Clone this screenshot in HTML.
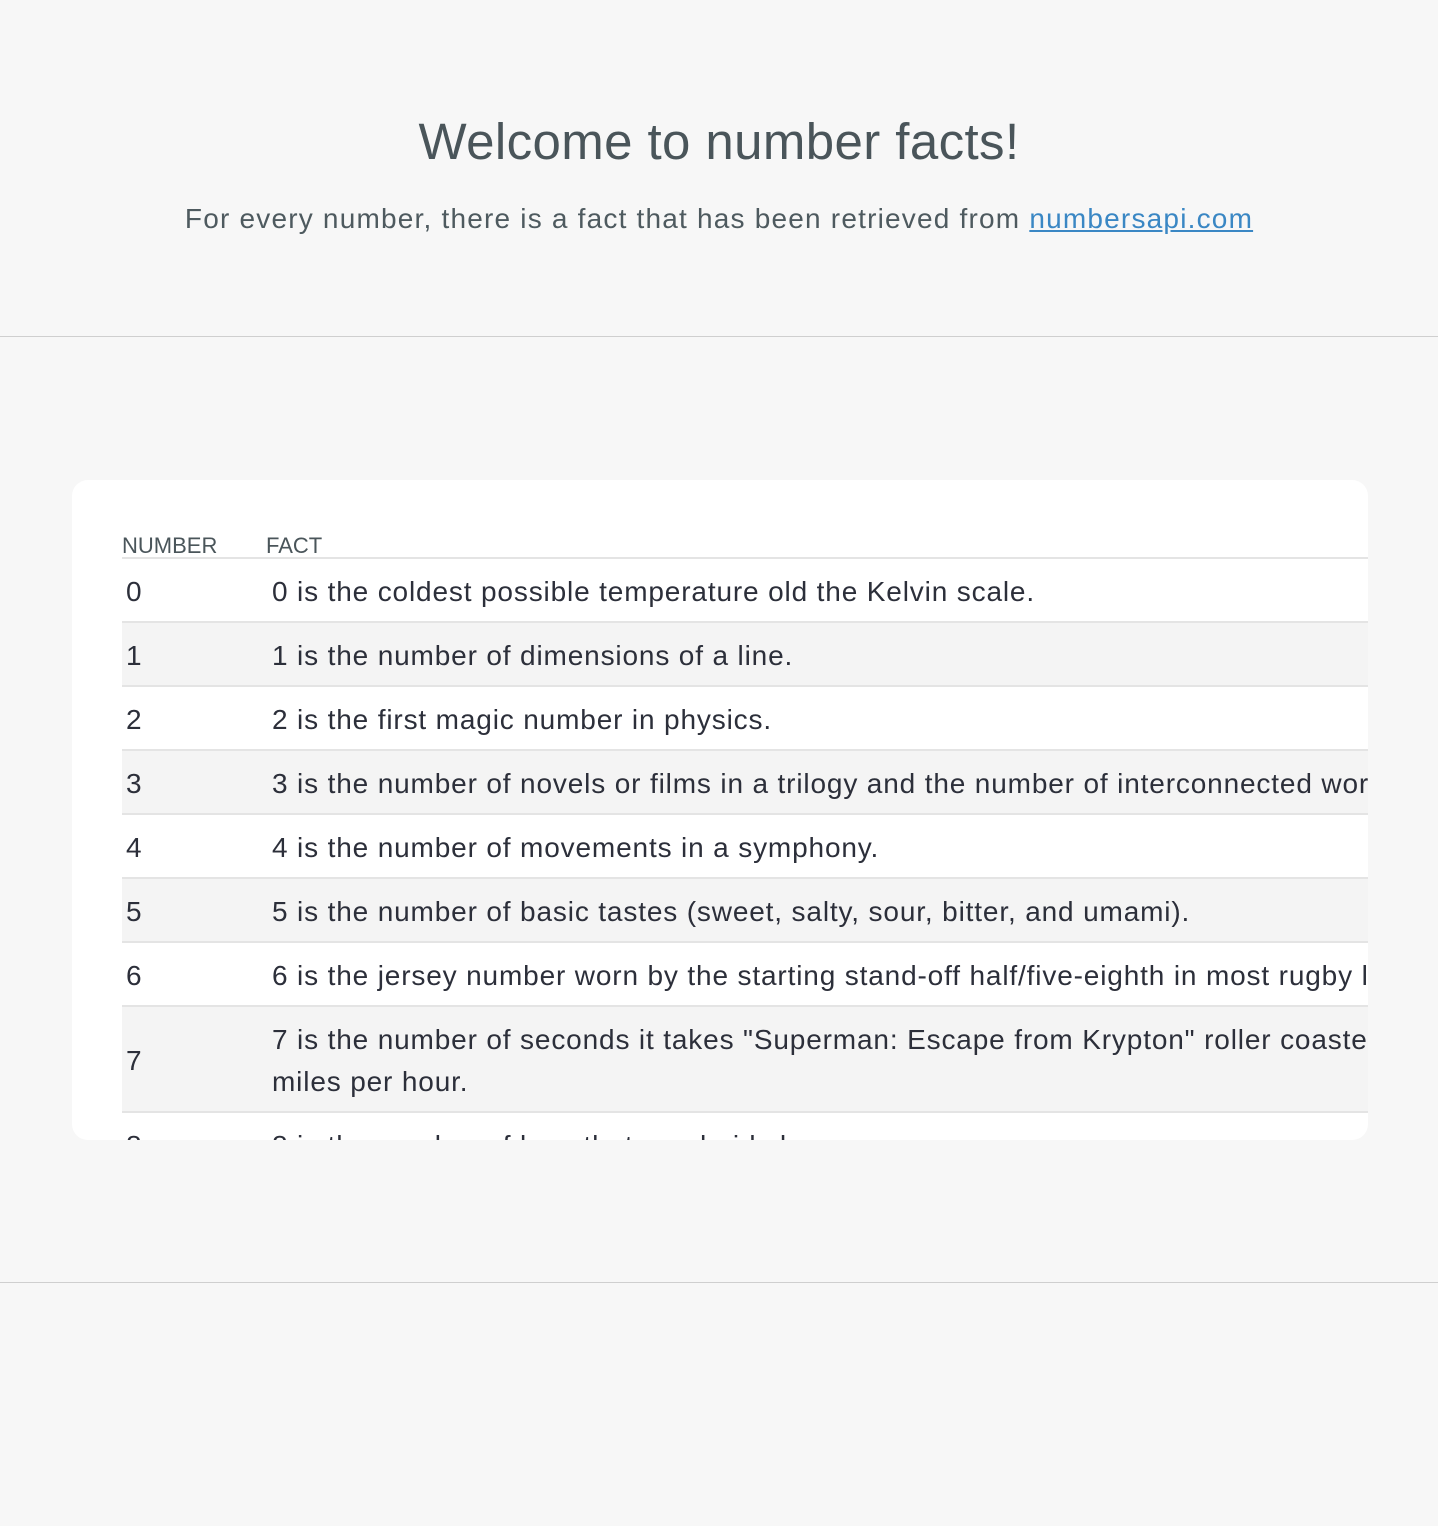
<!DOCTYPE html>
<html><head><meta charset="utf-8"><style>
html,body{margin:0;padding:0;}
body{width:1438px;height:1526px;background:#f7f7f7;font-family:"Liberation Sans",sans-serif;position:relative;overflow:hidden;}
h1{position:absolute;top:110px;left:0;width:1438px;text-align:center;margin:0;font-weight:normal;font-size:51px;letter-spacing:0.4px;color:#4a555a;line-height:64px;}
.sub{position:absolute;top:199px;left:0;width:1438px;text-align:center;font-size:28px;letter-spacing:1.2px;color:#4e5a5f;line-height:40px;margin:0;}
.sub a{color:#3a87c4;text-decoration:underline;}
.hr{position:absolute;left:0;width:1438px;height:1px;background:#cfcfcf;}
.card{position:absolute;left:72px;top:480px;width:1296px;height:660px;background:#fff;border-radius:16px;overflow:hidden;}
.hd{position:absolute;top:53px;font-size:22px;color:#4a555a;}
.row{position:absolute;left:50px;width:1500px;border-top:2px solid #e4e4e4;font-size:28px;letter-spacing:0.85px;color:#2c2f3a;white-space:nowrap;}
.row.g{background:#f4f4f4;}
.n{position:absolute;left:4px;}
.f{position:absolute;left:150px;line-height:42px;}
</style></head><body>
<h1>Welcome to number facts!</h1>
<p class="sub">For every number, there is a fact that has been retrieved from <a>numbersapi.com</a></p>
<div class="hr" style="top:336px"></div>
<div class="card">
<div class="hd" style="left:50px">NUMBER</div>
<div class="hd" style="left:194px">FACT</div>
<div class="row" style="top:77px;height:62px"><span class="n" style="top:17px">0</span><span class="f" style="top:17px;line-height:normal">0 is the coldest possible temperature old the Kelvin scale.</span></div>
<div class="row g" style="top:141px;height:62px"><span class="n" style="top:17px">1</span><span class="f" style="top:17px;line-height:normal">1 is the number of dimensions of a line.</span></div>
<div class="row" style="top:205px;height:62px"><span class="n" style="top:17px">2</span><span class="f" style="top:17px;line-height:normal">2 is the first magic number in physics.</span></div>
<div class="row g" style="top:269px;height:62px"><span class="n" style="top:17px">3</span><span class="f" style="top:17px;line-height:normal">3 is the number of novels or films in a trilogy and the number of interconnected works</span></div>
<div class="row" style="top:333px;height:62px"><span class="n" style="top:17px">4</span><span class="f" style="top:17px;line-height:normal">4 is the number of movements in a symphony.</span></div>
<div class="row g" style="top:397px;height:62px"><span class="n" style="top:17px">5</span><span class="f" style="top:17px;line-height:normal">5 is the number of basic tastes (sweet, salty, sour, bitter, and umami).</span></div>
<div class="row" style="top:461px;height:62px"><span class="n" style="top:17px">6</span><span class="f" style="top:17px;line-height:normal">6 is the jersey number worn by the starting stand-off half/five-eighth in most rugby league</span></div>
<div class="row g" style="top:525px;height:104px"><span class="n" style="top:38px">7</span><span class="f" style="top:12px">7 is the number of seconds it takes "Superman: Escape from Krypton" roller coaster<br>miles per hour.</span></div>
<div class="row" style="top:631px;height:62px"><span class="n" style="top:17px">8</span><span class="f" style="top:17px;line-height:normal">8 is the number of legs that arachnids have.</span></div>
</div>
<div class="hr" style="top:1282px"></div>
</body></html>
